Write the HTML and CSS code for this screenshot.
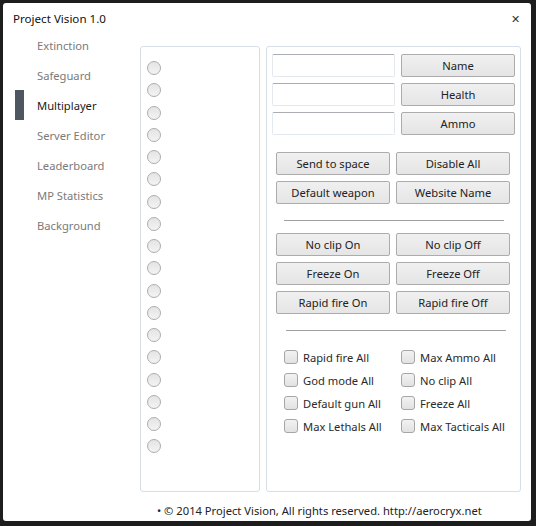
FILE: index.html
```html
<!DOCTYPE html>
<html>
<head>
<meta charset="utf-8">
<title>Project Vision 1.0</title>
<link rel="stylesheet" href="styles.css">
</head>
<body>
<div class="window">
  <header class="titlebar">
    <span class="title">Project Vision 1.0</span>
    <span class="close">✕</span>
  </header>
  <div class="main">
    <nav class="sidebar">
      <div class="nav-item"><span class="marker"></span><span class="label">Extinction</span></div>
      <div class="nav-item"><span class="marker"></span><span class="label">Safeguard</span></div>
      <div class="nav-item active"><span class="marker"></span><span class="label">Multiplayer</span></div>
      <div class="nav-item"><span class="marker"></span><span class="label">Server Editor</span></div>
      <div class="nav-item"><span class="marker"></span><span class="label">Leaderboard</span></div>
      <div class="nav-item"><span class="marker"></span><span class="label">MP Statistics</span></div>
      <div class="nav-item"><span class="marker"></span><span class="label">Background</span></div>
    </nav>
    <section class="panel players">
      <div class="radio"></div><div class="radio"></div><div class="radio"></div>
      <div class="radio"></div><div class="radio"></div><div class="radio"></div>
      <div class="radio"></div><div class="radio"></div><div class="radio"></div>
      <div class="radio"></div><div class="radio"></div><div class="radio"></div>
      <div class="radio"></div><div class="radio"></div><div class="radio"></div>
      <div class="radio"></div><div class="radio"></div><div class="radio"></div>
    </section>
    <section class="panel actions">
      <div class="field-rows">
        <div class="field-row"><input class="textbox" type="text"><button class="btn wide">Name</button></div>
        <div class="field-row"><input class="textbox" type="text"><button class="btn wide">Health</button></div>
        <div class="field-row"><input class="textbox" type="text"><button class="btn wide">Ammo</button></div>
      </div>
      <div class="btn-grid first">
        <button class="btn">Send to space</button>
        <button class="btn">Disable All</button>
        <button class="btn">Default weapon</button>
        <button class="btn">Website Name</button>
      </div>
      <hr class="sep sep-a">
      <div class="btn-grid">
        <button class="btn">No clip On</button>
        <button class="btn">No clip Off</button>
        <button class="btn">Freeze On</button>
        <button class="btn">Freeze Off</button>
        <button class="btn">Rapid fire On</button>
        <button class="btn">Rapid fire Off</button>
      </div>
      <hr class="sep sep-b">
      <div class="checks">
        <label class="check"><span class="box"></span>Rapid fire All</label>
        <label class="check"><span class="box"></span>Max Ammo All</label>
        <label class="check"><span class="box"></span>God mode All</label>
        <label class="check"><span class="box"></span>No clip All</label>
        <label class="check"><span class="box"></span>Default gun All</label>
        <label class="check"><span class="box"></span>Freeze All</label>
        <label class="check"><span class="box"></span>Max Lethals All</label>
        <label class="check"><span class="box"></span>Max Tacticals All</label>
      </div>
    </section>
  </div>
  <footer class="footer">• © 2014 Project Vision, All rights reserved. http://aerocryx.net</footer>
</div>
</body>
</html>
```
FILE: styles.css
```css
html, body {
  margin: 0;
  padding: 0;
}

body {
  background: #1d1d1d;
  width: 536px;
  height: 526px;
  overflow: hidden;
  font-family: "Noto Sans", "Open Sans", sans-serif;
  font-size: 11.2px;
  color: #222;
}

.window {
  margin: 3px;
  width: 528px;
  height: 518px;
  background: #fff;
  border-radius: 3px;
  display: flex;
  flex-direction: column;
}

/* title bar */
.titlebar {
  height: 26px;
  display: flex;
  align-items: center;
  justify-content: space-between;
  padding: 2px 11px 0 10px;
}

.title {
  font-size: 11.6px;
  color: #111;
}

.close {
  font-size: 11px;
  color: #333;
}

/* body: sidebar + two panels */
.main {
  display: flex;
  margin-top: 15px;
  height: 446px;
}

.sidebar {
  width: 137px;
  margin-top: -16px;
  display: flex;
  flex-direction: column;
}

.nav-item {
  height: 30px;
  display: flex;
  align-items: center;
}

.marker {
  width: 9px;
  height: 30px;
  margin-left: 12px;
}

.nav-item .label {
  margin-left: 13px;
  color: #7a7a7a;
}

.nav-item.active .marker {
  background: #4e5660;
}

.nav-item.active .label {
  color: #1a1a1a;
}

.panel {
  box-sizing: border-box;
  border: 1px solid #d6dfe8;
  border-radius: 3px;
  height: 446px;
}

.players {
  width: 120px;
  margin-right: 6px;
  padding: 14px 0 0 6px;
}

.radio {
  box-sizing: border-box;
  width: 14px;
  height: 14px;
  border-radius: 50%;
  border: 1px solid #adadad;
  background: linear-gradient(#e4e4e4, #f3f3f3);
  margin-bottom: 8.25px;
}

.actions {
  width: 255px;
  padding: 7px 0 0 5px;
}

.field-rows {
  display: flex;
  flex-direction: column;
  gap: 6px;
}

.field-row {
  display: flex;
  gap: 6px;
}

.textbox {
  box-sizing: border-box;
  width: 123px;
  height: 23px;
  margin: 0;
  border: 1px solid #e3e9ef;
  border-top-color: #abadb3;
  border-radius: 2px;
  background: #fff;
  padding: 0 4px;
  font: inherit;
}

.btn {
  box-sizing: border-box;
  width: 114px;
  height: 23px;
  margin: 0;
  padding: 0;
  border: 1px solid #acacac;
  border-radius: 2px;
  background: linear-gradient(#f0f0f0, #e5e5e5);
  font: inherit;
  color: #222;
  text-align: center;
}

.btn-grid {
  display: grid;
  grid-template-columns: 114px 114px;
  column-gap: 6px;
  row-gap: 6px;
  margin-left: 4px;
}

.btn-grid.first {
  margin-top: 17px;
}

.sep {
  border: 0;
  height: 1px;
  width: 220px;
  background: #a0a0a0;
  margin: 16px 0 12px 0;
}

.sep-a {
  margin-left: 12px;
}

.sep-b {
  margin-left: 14px;
  margin-bottom: 19px;
}

.checks {
  display: grid;
  grid-template-columns: 117px 110px;
  row-gap: 9px;
  margin-left: 12px;
}

.check {
  display: flex;
  align-items: center;
  height: 14px;
  color: #2a2a2a;
  white-space: nowrap;
}

.box {
  box-sizing: border-box;
  width: 14px;
  height: 14px;
  border: 1px solid #a6a6a6;
  border-radius: 3px;
  background: linear-gradient(#f2f2f2, #e2e2e2);
  margin-right: 5px;
  flex: none;
}

.footer {
  padding: 11px 0 0 154px;
  color: #222;
}
```
